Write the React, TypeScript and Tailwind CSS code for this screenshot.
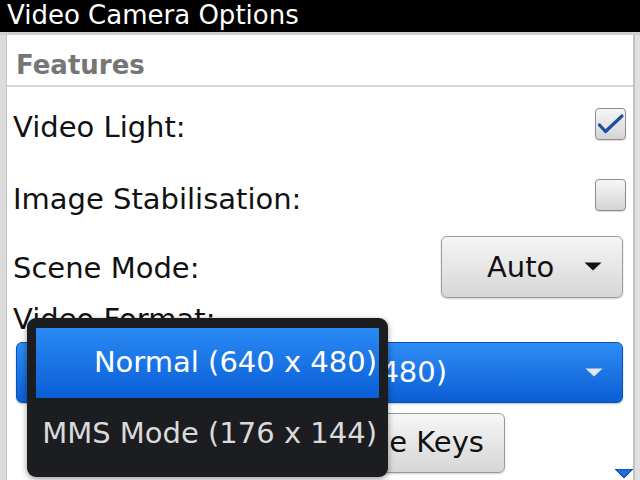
import React from "react";

const FONT = { fontFamily: '"DejaVu Sans", "Liberation Sans", sans-serif' };

function CheckBox({ checked }: { checked: boolean }) {
  return (
    <div className="mb-[4px] h-[32px] w-[31px] rounded-[4px] border border-[#8c8c8c] bg-gradient-to-b from-[#f7f7f7] to-[#d4d4d4] shadow-[0_1px_1px_rgba(0,0,0,0.15)]">
      {checked && (
        <svg width="31" height="32" viewBox="0 0 31 32" className="-ml-px -mt-px">
          <path
            d="M4.5 17 L10.5 23.5 L27 8"
            fill="none"
            stroke="#1d4f9e"
            strokeWidth="3.2"
            strokeLinecap="round"
            strokeLinejoin="round"
          />
        </svg>
      )}
    </div>
  );
}

function Arrow({ color }: { color: string }) {
  return (
    <svg width="18" height="9" viewBox="0 0 18 9">
      <path d="M0.5 0.5 L17.5 0.5 L9 8.5 Z" fill={color} />
    </svg>
  );
}

export default function App() {
  return (
    <div
      className="relative flex h-[480px] w-[640px] flex-col overflow-hidden bg-white text-[29px] text-[#111]"
      style={FONT}
    >
      {/* title bar */}
      <div className="h-[32px] shrink-0 bg-black pl-[7px] text-[26px] leading-[30px] text-white">
        Video Camera Options
      </div>
      <div className="h-[3px] shrink-0 bg-[#cfcfcf]" />

      <div className="flex min-h-0 flex-1">
        <div className="w-[7px] shrink-0 border-r border-[#c4c4c4] bg-[#dcdcdc]" />

        <div className="flex min-w-0 flex-1 flex-col">
          <div className="h-[50px] shrink-0 pl-[9px] pt-[15px] text-[26px] font-bold leading-[30px] text-[#767676]">
            Features
          </div>
          <div className="h-[2px] shrink-0 bg-[#d6d6d6]" />

          <div className="flex flex-col pl-[6px] pr-[7px]">
            <div className="flex h-[78px] items-center justify-between leading-[34px]">
              <span className="mt-[2px]">Video Light:</span>
              <CheckBox checked />
            </div>
            <div className="flex h-[63px] items-center justify-between leading-[34px]">
              <span className="mt-[4px]">Image Stabilisation:</span>
              <CheckBox checked={false} />
            </div>
            <div className="flex h-[77px] items-center justify-between leading-[34px]">
              <span className="mt-[2px]">Scene Mode:</span>
              <button className="mr-[3px] flex h-[62px] w-[182px] items-center justify-between rounded-[6px] border border-[#9a9a9a] bg-gradient-to-b from-[#f6f6f6] to-[#d6d6d6] pl-[45px] pr-[20px] shadow-[0_1px_2px_rgba(0,0,0,0.2)]">
                <span>Auto</span>
                <Arrow color="#111" />
              </button>
            </div>
            <div className="leading-[28px]">Video Format:</div>
            <div className="mx-[3px] mt-[9px] flex h-[61px] items-center justify-between rounded-[6px] border border-[#0b52b8] bg-gradient-to-b from-[#2e8cf4] to-[#0a5ed6] pl-[147px] pr-[19px] text-white shadow-[0_1px_2px_rgba(0,0,0,0.25)]">
              <span>Normal (640 x 480)</span>
              <Arrow color="#e4e8ee" />
            </div>
            <button className="ml-[262px] mt-[10px] flex h-[60px] w-[230px] items-center justify-center rounded-[6px] border border-[#9a9a9a] bg-gradient-to-b from-[#f6f6f6] to-[#d6d6d6] shadow-[0_1px_2px_rgba(0,0,0,0.2)]">
              Change Keys
            </button>
          </div>
        </div>

        <div className="w-[7px] shrink-0 border-l-[2px] border-[#c2c2c2] bg-[#e0e0e0]" />
      </div>

      {/* popup list */}
      <div className="absolute left-[27px] top-[318px] flex h-[159px] w-[361px] flex-col rounded-[9px] bg-[#1c1d21] px-[9px] pt-[10px] shadow-[0_2px_6px_rgba(0,0,0,0.4)]">
        <div className="flex h-[70px] items-center justify-end bg-gradient-to-b from-[#2a8af4] to-[#0a5ed6] pr-[2px] text-white">
          Normal (640 x 480)
        </div>
        <div className="flex h-[72px] items-center justify-end pr-[2px] text-[#dadada]">
          MMS Mode (176 x 144)
        </div>
      </div>

      {/* scroll indicator */}
      <svg
        width="18"
        height="9"
        viewBox="0 0 18 9"
        className="absolute left-[615px] top-[469px]"
      >
        <path d="M0 0 L18 0 L9 9 Z" fill="#1f6fd6" stroke="#0b3f8a" strokeWidth="1" />
      </svg>
    </div>
  );
}
